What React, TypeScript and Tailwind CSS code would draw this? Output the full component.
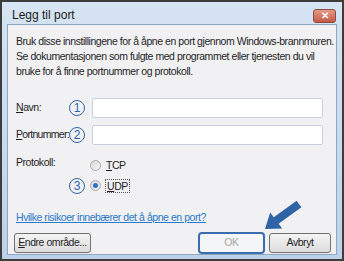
const font = { fontFamily: '"Liberation Sans", Arial, sans-serif' };

function Num({ n }: { n: string }) {
  return (
    <span className="flex h-[16px] w-[16px] shrink-0 items-center justify-center rounded-full border-[1.5px] border-[#2f64aa] text-[12px] leading-none tracking-normal text-[#2f64aa]">
      {n}
    </span>
  );
}

function Radio({ checked }: { checked?: boolean }) {
  return (
    <span className="flex h-[11px] w-[11px] items-center justify-center rounded-full border border-[#a9a9a9] bg-gradient-to-br from-[#d8d8d8] to-[#f6f6f6]">
      {checked && <span className="h-[5px] w-[5px] rounded-full bg-[#2a73c8]" />}
    </span>
  );
}

export default function App() {
  return (
    <div
      className="relative flex h-[261px] w-[344px] flex-col overflow-hidden border-2 border-[#3d3d3d] bg-gradient-to-b from-[#d6e4f3] to-[#bcd2ea] text-[10.5px] tracking-[-0.45px] whitespace-nowrap text-[#1e1e1e]"
      style={font}
    >
      {/* title bar */}
      <div className="flex h-[22px] shrink-0 items-start justify-between pl-[10px] pr-[6px]">
        <span className="mt-[6px] text-[12px] leading-[14px] tracking-normal text-[#1b1b1b]">Legg til port</span>
        <span className="mt-[7px] flex h-[14px] w-[23px] items-center justify-center rounded-[3px] border border-[#8b4a3c] bg-gradient-to-b from-[#e49a89] to-[#c55a44] text-[10px] font-bold leading-none text-white">
          ✕
        </span>
      </div>

      {/* body */}
      <div className="mx-[5px] mb-[5px] flex flex-1 flex-col border border-[#8fa6bf] bg-[#f1f1f4] px-[8px] pt-[9px]">
        <p className="leading-[15px]">
          Bruk disse innstillingene for å åpne en port gjennom Windows-brannmuren.
          <br />
          Se dokumentasjonen som fulgte med programmet eller tjenesten du vil
          <br />
          bruke for å finne portnummer og protokoll.
        </p>

        <div className="mt-[19px] flex items-center">
          <span className="w-[53px]">
            <span className="underline">N</span>avn:
          </span>
          <Num n="1" />
          <span className="ml-[7px] h-[20px] w-[231px] rounded-[2px] border border-[#c9d1dc] bg-white" />
        </div>

        <div className="mt-[7px] flex items-center">
          <span className="w-[53px] tracking-[-0.7px]">
            <span className="underline">P</span>ortnummer:
          </span>
          <Num n="2" />
          <span className="ml-[7px] h-[20px] w-[231px] rounded-[2px] border border-[#c9d1dc] bg-white" />
        </div>

        <div className="mt-[8px] flex items-start">
          <span className="w-[74px] pt-[2px]">Protokoll:</span>
          <div className="mt-[5px] flex items-center gap-[5px]">
            <Radio />
            <span>
              <span className="underline">T</span>CP
            </span>
          </div>
        </div>

        <div className="mt-[4px] flex items-center">
          <span className="w-[53px]" />
          <Num n="3" />
          <div className="ml-[5px] flex items-center gap-[4px]">
            <Radio checked />
            <span className="border border-dotted border-[#555] px-[1px] leading-[12px]">
              <span className="underline">U</span>DP
            </span>
          </div>
        </div>

        <span className="mt-[16px] text-[#2a78c8] underline">
          Hvilke risikoer innebærer det å åpne en port?
        </span>

        <div className="-mr-[3px] mt-[6px] flex items-center">
          <span className="ml-[-2px] flex h-[20px] w-[77px] items-center justify-center rounded-[3px] border border-[#707070] bg-gradient-to-b from-[#f4f4f4] to-[#dcdcdc]">
            <span className="underline">E</span>ndre område...
          </span>
          <span className="ml-auto flex h-[22px] w-[67px] items-center justify-center rounded-[4px] border-2 border-[#3a6db0] bg-[#f4f5f7] text-[#a8a8a8]">
            OK
          </span>
          <span className="ml-[4px] flex h-[20px] w-[62px] items-center justify-center rounded-[3px] border border-[#707070] bg-gradient-to-b from-[#f4f4f4] to-[#dcdcdc]">
            Avbryt
          </span>
        </div>
      </div>

      {/* annotation arrow */}
      <svg className="pointer-events-none absolute left-[-2px] top-[-2px]" width="344" height="261">
        <polygon
          points="265,229 282.2,228.5 278.6,223.7 301.4,207.2 296.6,200.8 273.8,217.3 270.2,212.5"
          fill="#2e63a6"
        />
      </svg>
    </div>
  );
}
